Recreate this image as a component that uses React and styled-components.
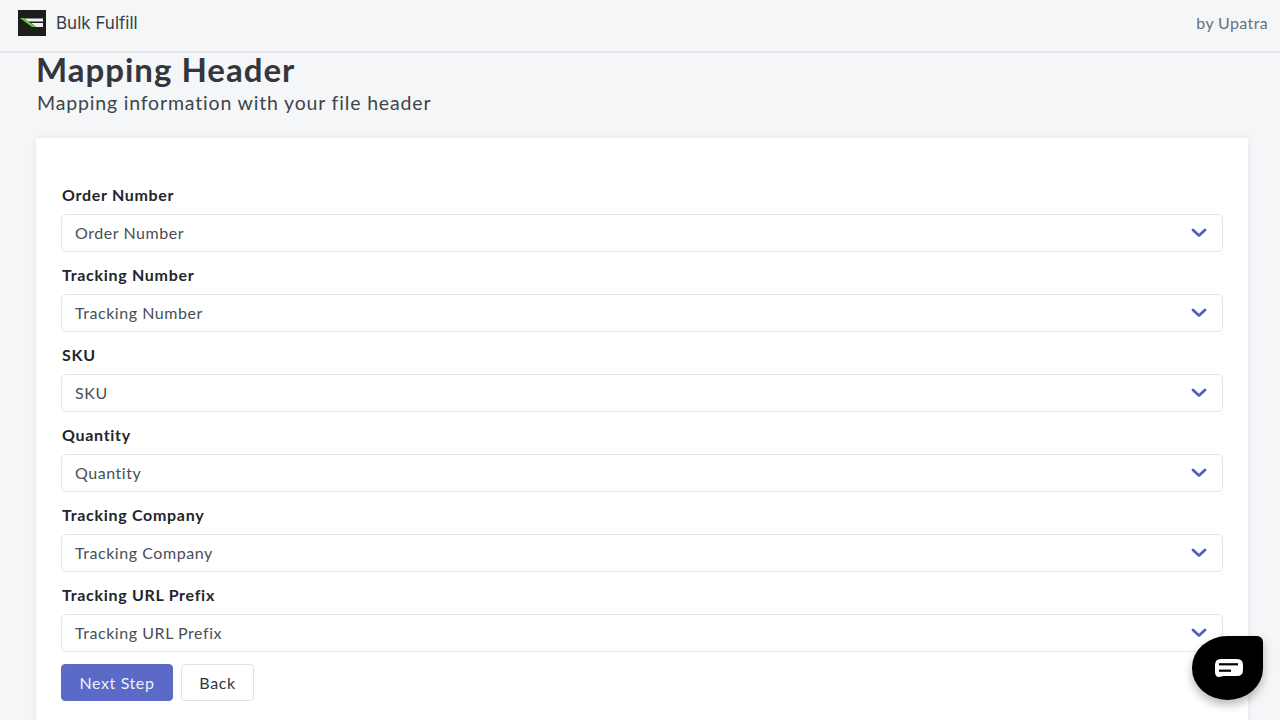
import React from "react";
import styled, { createGlobalStyle } from "styled-components";

const Global = createGlobalStyle`
  html, body { margin: 0; padding: 0; height: 720px; overflow: hidden; background: #f4f6f8; }
  body { font-family: "Lato", "Open Sans", "Liberation Sans", sans-serif; }
  * { box-sizing: border-box; }
`;

const Page = styled.div`
  width: 1280px;
  height: 720px;
  overflow: hidden;
  background: #f4f6f8;
`;

const TopBar = styled.header`
  height: 53px;
  display: flex;
  align-items: center;
  justify-content: space-between;
  padding: 0 12px 6px 18px;
  border-bottom: 2px solid #e3e5ea;
`;

const Brand = styled.div`
  display: flex;
  align-items: center;
  gap: 10px;
  font-family: "Inter", "Liberation Sans", sans-serif;
  font-size: 17px;
  color: #3a3f47;
`;

const Logo = styled.svg`
  width: 28px;
  height: 26px;
  display: block;
`;

const ByLine = styled.div`
  font-size: 16px;
  letter-spacing: 0.36px;
  color: #68707c;
`;

const Main = styled.main`
  padding: 0 32px 0 36px;
`;

const Title = styled.h1`
  margin: 0;
  font-size: 33px;
  line-height: 32px;
  font-weight: 700;
  letter-spacing: 1px;
  color: #33373d;
`;

const Subtitle = styled.p`
  margin: 3px 0 0 1px;
  font-size: 19.5px;
  line-height: 30px;
  letter-spacing: 0.83px;
  color: #3f444b;
`;

const Card = styled.section`
  margin-top: 20px;
  background: #fff;
  padding: 44px 25px 60px;
  box-shadow: 0 0 6px rgba(60, 70, 90, 0.09);
`;

const Field = styled.div`
  display: flex;
  flex-direction: column;
  height: 80px;
`;

const Label = styled.label`
  margin-left: 1px;
  font-size: 16px;
  line-height: 26px;
  height: 32px;
  font-weight: 700;
  letter-spacing: 0.7px;
  color: #22262b;
`;

const SelectBox = styled.div`
  height: 38px;
  display: flex;
  align-items: center;
  justify-content: space-between;
  padding: 0 15px 1px 13px;
  background: #fff;
  border: 1px solid #e1e4ee;
  border-radius: 5px;
  font-size: 16px;
  letter-spacing: 0.55px;
  color: #494e55;
`;

const Chevron = styled.svg`
  width: 16px;
  height: 10px;
  display: block;
  margin-top: 1px;
`;

const Actions = styled.div`
  display: flex;
  gap: 8px;
  margin-top: 2px;
`;

const Button = styled.button`
  height: 37px;
  padding: 0;
  width: ${(p) => (p.$primary ? "112px" : "73px")};
  border-radius: 4px;
  border: 1px solid ${(p) => (p.$primary ? "#5a6ac6" : "#dfe2e6")};
  background: ${(p) => (p.$primary ? "#5a6ac6" : "#fff")};
  color: ${(p) => (p.$primary ? "#eef0fb" : "#33373d")};
  font-family: inherit;
  font-size: 16px;
  letter-spacing: 0.6px;
`;

const ChatBubble = styled.div`
  position: absolute;
  left: 1192px;
  top: 636px;
  width: 71px;
  height: 64px;
  padding-left: 2px;
  background: #000;
  border-radius: 36px 6px 36px 36px / 32px 6px 32px 32px;
  box-shadow: 0 5px 10px rgba(0, 0, 0, 0.28);
  display: flex;
  align-items: center;
  justify-content: center;
`;

const ChatIcon = styled.svg`
  width: 28px;
  height: 18px;
  display: block;
`;

const fields = ["Order Number", "Tracking Number", "SKU", "Quantity", "Tracking Company", "Tracking URL Prefix"];

export default function App() {
  return (
    <Page>
      <Global />
      <TopBar>
        <Brand>
          <Logo viewBox="0 0 28 26">
            <rect width="28" height="26" fill="#1d1d1b" />
            <polygon points="6,8.5 25,8.5 25,11.5 10,11.5" fill="#f1f1f1" />
            <polygon points="13,13 25,13 25,17 18,17" fill="#f1f1f1" />
            <polygon points="2,8 5.5,8 18,17 14,17" fill="#5fd03c" />
          </Logo>
          Bulk Fulfill
        </Brand>
        <ByLine>by Upatra</ByLine>
      </TopBar>
      <Main>
        <Title>Mapping Header</Title>
        <Subtitle>Mapping information with your file header</Subtitle>
        <Card>
          {fields.map((f) => (
            <Field key={f}>
              <Label>{f}</Label>
              <SelectBox>
                {f}
                <Chevron viewBox="0 0 16 10">
                  <path d="M2 2 L8 7.5 L14 2" fill="none" stroke="#4f5fc4" strokeWidth="2.8" strokeLinecap="round" strokeLinejoin="round" />
                </Chevron>
              </SelectBox>
            </Field>
          ))}
          <Actions>
            <Button $primary>Next Step</Button>
            <Button>Back</Button>
          </Actions>
        </Card>
      </Main>
      <ChatBubble>
        <ChatIcon viewBox="0 0 28 18">
          <path d="M6 0 H22 Q28 0 28 6 V11 Q28 17 22 17 H9 L4 18 Q0 18 0 13 V6 Q0 0 6 0 Z" fill="#fff" />
          <rect x="4" y="4.2" width="19" height="2.2" fill="#000" />
          <rect x="4" y="10.6" width="12" height="2.2" fill="#000" />
        </ChatIcon>
      </ChatBubble>
    </Page>
  );
}
